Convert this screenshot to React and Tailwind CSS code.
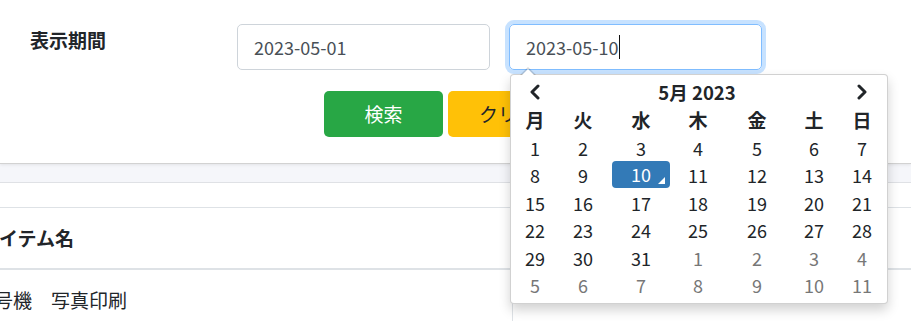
import React from "react";

const weeks = [
  [[1, 0], [2, 0], [3, 0], [4, 0], [5, 0], [6, 0], [7, 0]],
  [[8, 0], [9, 0], [10, 2], [11, 0], [12, 0], [13, 0], [14, 0]],
  [[15, 0], [16, 0], [17, 0], [18, 0], [19, 0], [20, 0], [21, 0]],
  [[22, 0], [23, 0], [24, 0], [25, 0], [26, 0], [27, 0], [28, 0]],
  [[29, 0], [30, 0], [31, 0], [1, 1], [2, 1], [3, 1], [4, 1]],
  [[5, 1], [6, 1], [7, 1], [8, 1], [9, 1], [10, 1], [11, 1]],
];

const dows = ["月", "火", "水", "木", "金", "土", "日"];

function Chevron({ dir }) {
  return (
    <svg width="12" height="16" viewBox="0 0 12 16" fill="none">
      <polyline
        points={dir === "left" ? "9,2 3,8 9,14" : "3,2 9,8 3,14"}
        stroke="#212529"
        strokeWidth="3"
        strokeLinecap="round"
        strokeLinejoin="round"
      />
    </svg>
  );
}

function Calendar() {
  const grid = "grid grid-cols-[38px_58px_58px_56px_62px_52px_44px]";
  return (
    <div className="absolute left-[1px] top-[50px] w-[378px] h-[230px] bg-white border border-[rgba(0,0,0,0.18)] rounded-[4px] shadow-[0_6px_12px_rgba(0,0,0,0.18)] pl-[5px] pr-[3px] pt-[3px] z-10">
      {/* arrow */}
      <div className="absolute left-[9px] top-[-8px] w-0 h-0 border-l-[8px] border-r-[8px] border-b-[8px] border-l-transparent border-r-transparent border-b-[rgba(0,0,0,0.15)]" />
      <div className="absolute left-[10px] top-[-6px] w-0 h-0 border-l-[7px] border-r-[7px] border-b-[7px] border-l-transparent border-r-transparent border-b-white" />
      <div className={`${grid} h-[28px] items-center`}>
        <div className="flex justify-center">
          <Chevron dir="left" />
        </div>
        <div className="col-span-5 text-center font-bold text-[18.5px] leading-none text-[#212529]">
          5月 2023
        </div>
        <div className="flex justify-center">
          <Chevron dir="right" />
        </div>
      </div>
      <div className={`${grid} h-[27px] items-center`}>
        {dows.map((d) => (
          <div key={d} className="text-center font-bold text-[19px] leading-none text-[#212529]">
            {d}
          </div>
        ))}
      </div>
      <div className="pt-[1px]">
        {weeks.map((w, i) => (
          <div key={i} className={`${grid} h-[27.5px]`}>
            {w.map(([n, t], j) =>
              t === 2 ? (
                <div
                  key={j}
                  className="relative flex items-center justify-center bg-[#337ab7] rounded-[4px] text-white text-[18px] leading-none h-[27px] -mt-[1px]"
                >
                  {n}
                  <div className="absolute right-[5px] bottom-[4px] w-0 h-0 border-l-[7px] border-b-[7px] border-l-transparent border-b-white" />
                </div>
              ) : (
                <div
                  key={j}
                  className={`flex items-center justify-center text-[18px] leading-none ${
                    t === 1 ? "text-[#777777]" : "text-[#212529]"
                  }`}
                >
                  {n}
                </div>
              )
            )}
          </div>
        ))}
      </div>
    </div>
  );
}

export default function App() {
  return (
    <div className="relative w-[911px] h-[321px] overflow-hidden bg-white font-['Noto_Sans_CJK_JP',sans-serif]">
      <div className="h-[164px] border-b border-[#d2d2d2] bg-white shadow-[0_1px_3px_rgba(0,0,0,0.08)] relative z-[1]">
        <div className="flex pt-[24px]">
          <div className="w-[237px] pl-[30px] pt-[2px] font-bold text-[19px] leading-[28px] text-[#212529]">
            表示期間
          </div>
          <div className="w-[253px] h-[46px] border border-[#ced4da] rounded-[5px] flex items-center pl-[16px] text-[18px] text-[#495057]">
            2023-05-01
          </div>
          <div className="relative ml-[19px] w-[253px] h-[46px]">
            <div className="w-full h-full border border-[#80bdff] rounded-[5px] shadow-[0_0_0_4px_rgba(0,123,255,0.22)] flex items-center pl-[16px] text-[18px] text-[#495057]">
              2023-05-10
              <span className="inline-block w-[1px] h-[24px] bg-[#111] ml-[1px]" />
            </div>
            <Calendar />
          </div>
        </div>
        <div className="flex pl-[324px] mt-[21px] gap-[5px]">
          <div className="w-[119px] h-[46px] rounded-[5px] bg-[#28a745] text-white text-[19px] flex items-center justify-center">
            検索
          </div>
          <div className="w-[119px] h-[46px] rounded-[5px] bg-[#ffc107] text-[#212529] text-[19px] flex items-center justify-center">
            クリア
          </div>
        </div>
      </div>
      <div className="h-[19px] bg-[#f5f6fa] border-b border-[#dfe1e5]" />
      <div className="h-[25px] border-b border-[#dee2e6]" />
      <div className="h-[62px] border-b-2 border-[#dee2e6] flex items-center font-bold text-[19px] text-[#212529] -ml-[1px]">
        イテム名
      </div>
      <div className="flex h-[60px]">
        <div className="w-[513px] border-r border-[#dee2e6] pt-[14px] text-[19px] leading-[32px] text-[#212529] overflow-hidden whitespace-nowrap">
          <span className="-ml-[6px] inline-block">号機　写真印刷</span>
        </div>
        <div className="flex-1" />
      </div>
    </div>
  );
}
